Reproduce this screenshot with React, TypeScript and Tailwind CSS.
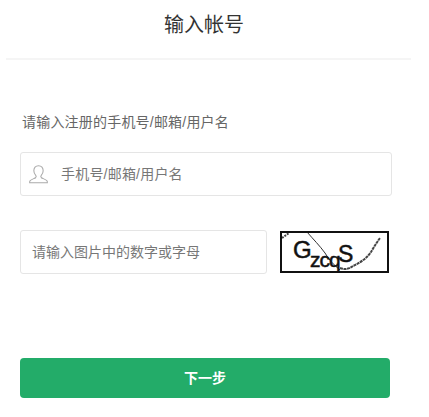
const font = '"Liberation Sans", "Noto Sans CJK SC", sans-serif';

function UserIcon() {
  return (
    <svg className="w-[19px] h-[19px] shrink-0" viewBox="0 0 20 20" fill="none" stroke="#aaa" strokeWidth={1.1}>
      <path d="M10 .8c-3.200 0-4.900 2.300-4.900 5.200 0 2 .9 3.800 2 5 .4.500.4 1.900-.2 2.400-1 .8-5.300 1.900-6 3.500-.2.500-.2 1.200-.2 1.800h18.600c0-.6 0-1.300-.2-1.800-.7-1.600-5-2.700-6-3.500-.6-.5-.6-1.900-.2-2.400 1.100-1.200 2-3 2-5 0-2.900-1.700-5.200-4.900-5.200z" />
    </svg>
  );
}

function Captcha() {
  return (
    <div className="ml-[13px] mt-px w-[109px] h-[42px] border-2 border-[#111] bg-white shrink-0 overflow-hidden">
      <svg className="w-full h-full" viewBox="0 0 105 38" fill="none">
        <path d="M0 5 L7 0" stroke="#444" strokeWidth={2} strokeDasharray="2 1" />
        <path d="M25 -1 C31 6 38 13 43 20 C47 27 52 32 58 37" stroke="#333" strokeWidth={1} />
        <path d="M58 35 C63 37 67 36 71 33 C78 30 85 25 89 19 C92 14 95 9 98 5" stroke="#444" strokeWidth={2} strokeDasharray="3 0.600" />
        <text fontFamily="Liberation Sans" fill="#111" stroke="#111" strokeWidth={0.5}>
          <tspan x="11" y="25" fontSize="24">G</tspan>
          <tspan x="28" y="34" fontSize="21" letterSpacing="-1">zcq</tspan>
          <tspan x="56" y="29" fontSize="23">S</tspan>
        </text>
      </svg>
    </div>
  );
}

export default function App() {
  return (
    <div className="w-[429px] h-[417px] bg-white overflow-hidden" style={{ fontFamily: font }}>
      <div className="mx-[6px] pr-[9px] w-[405px] h-[60px] border-b-2 border-[#f5f5f5] text-center text-[20px] leading-[50px] text-[#333]">
        输入帐号
      </div>

      <div className="pl-[20px] w-[392px]">
        <p className="mt-[52px] pl-[2px] text-[14px] leading-[20px] tracking-[0.2px] text-[#666]">请输入注册的手机号/邮箱/用户名</p>

        <div className="mt-[20px] h-[44px] flex items-center border border-[#e5e5e5] rounded-[3px] pl-[8px]">
          <UserIcon />
          <span className="ml-[13px] text-[14px] tracking-[0.2px] text-[#777]">手机号/邮箱/用户名</span>
        </div>

        <div className="mt-[34px] flex items-start">
          <div className="w-[247px] h-[44px] flex items-center border border-[#e5e5e5] rounded-[3px] pl-[11px] text-[14px] text-[#777]">
            请输入图片中的数字或字母
          </div>
          <Captcha />
        </div>

        <button className="mt-[84px] w-[370px] h-[40px] bg-[#23ac69] rounded-[4px] text-white text-[14px] font-bold">
          下一步
        </button>
      </div>
    </div>
  );
}
